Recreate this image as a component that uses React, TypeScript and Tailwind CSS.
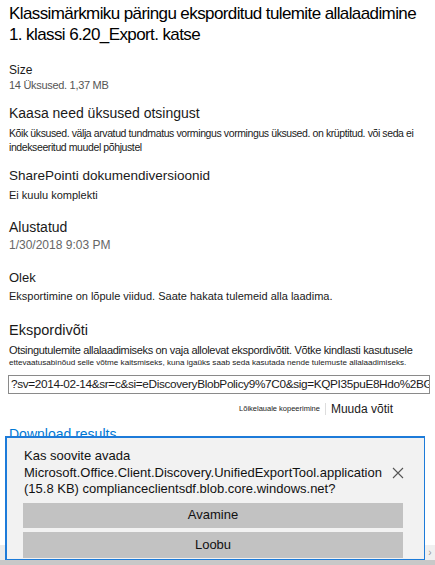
const sans = "font-['Liberation_Sans',Arial,sans-serif]";

const Field = ({ label, value, labelClass, valueClass }: { label: string; value: React.ReactNode; labelClass: string; valueClass: string }) => (
  <div>
    <div className={labelClass}>{label}</div>
    <div className={valueClass}>{value}</div>
  </div>
);

export default function App() {
  return (
    <div className={`relative w-[435px] h-[565px] overflow-hidden bg-white text-[#1a1a1a] ${sans}`}>
      <div className="px-[9px] pt-[3px]">
        <h1 className="whitespace-nowrap text-[17px] leading-[21px] tracking-[-0.6px] text-black">
          Klassimärkmiku päringu eksporditud tulemite allalaadimine
          <br />
          1. klassi 6.20_Export. katse
        </h1>

        <div className="mt-[17px]">
          <Field label="Size" value="14 Üksused. 1,37 MB" labelClass="text-[12px] leading-[16px]" valueClass="text-[11px] leading-[14px] text-[#555] tracking-[-0.3px]" />
        </div>

        <div className="mt-[12px]">
          <div className="text-[14px] leading-[18px]">Kaasa need üksused otsingust</div>
          <p className="mt-[4px] w-[410px] text-[10.5px] leading-[14px] tracking-[-0.4px]">
            Kõik üksused. välja arvatud tundmatus vormingus vormingus üksused. on krüptitud. või seda ei indekseeritud muudel põhjustel
          </p>
        </div>

        <div className="mt-[13px]">
          <Field label="SharePointi dokumendiversioonid" value="Ei kuulu komplekti" labelClass="text-[13.5px] leading-[18px]" valueClass="mt-[3px] text-[11px] leading-[14px]" />
        </div>

        <div className="mt-[16px]">
          <Field label="Alustatud" value="1/30/2018 9:03 PM" labelClass="text-[14px] leading-[18px]" valueClass="mt-[1px] text-[12px] leading-[16px] text-[#666]" />
        </div>

        <div className="mt-[16px]">
          <Field label="Olek" value="Eksportimine on lõpule viidud. Saate hakata tulemeid alla laadima." labelClass="text-[13px] leading-[17px]" valueClass="mt-[3px] text-[11px] leading-[14px]" />
        </div>

        <div className="mt-[18px]">
          <div className="text-[14.5px] leading-[19px]">Ekspordivõti</div>
          <p className="mt-[3px] whitespace-nowrap text-[11px] leading-[14px] tracking-[-0.33px]">
            Otsingutulemite allalaadimiseks on vaja allolevat ekspordivõtit. Võtke kindlasti kasutusele
          </p>
          <p className="whitespace-nowrap text-[8.1px] leading-[11px]">
            ettevaatusabinõud selle võtme kaitsmiseks, kuna igaüks saab seda kasutada nende tulemuste allalaadimiseks.
          </p>
          {/* key field, text runs past the right edge */}
          <div className="mt-[7px] ml-[-1px] h-[19px] w-[422px] overflow-hidden whitespace-nowrap border border-[#8a8a8a] px-[2px] text-[11.8px] leading-[17px] tracking-[-0.35px]">
            ?sv=2014-02-14&amp;sr=c&amp;si=eDiscoveryBlobPolicy9%7C0&amp;sig=KQPI35puE8Hdo%2BG3c
          </div>
          <div className="mt-[6px] flex items-center justify-end pr-[33px]">
            <span className="text-[7.5px]">Lõikelauale kopeerimine</span>
            <span className="mx-[5px] h-[12px] w-px bg-[#ddd]" />
            <span className="text-[12px]">Muuda võtit</span>
          </div>
          <div className="mt-[7px] text-[14px] leading-[18px] text-[#0078d4]">Download results</div>
        </div>
      </div>

      {/* browser download bar */}
      <div className="absolute left-[5px] top-[436px] w-[420px] h-[125px] border-2 border-r-[1.5px] border-[#1d7bd9] bg-[#f2f2f2]">
        <div className="flex pl-[17px] pr-[20px] pt-[10px]">
          <div className="flex-1 text-[13px] leading-[16.5px] text-[#111]">
            <div>Kas soovite avada</div>
            <div>Microsoft.Office.Client.Discovery.UnifiedExportTool.application</div>
            <div>(15.8 KB) complianceclientsdf.blob.core.windows.net?</div>
          </div>
          <svg width="12" height="12" viewBox="0 0 12 12" className="mt-[19px]">
            <path d="M1 1 L11 11 M11 1 L1 11" stroke="#555" strokeWidth="1.1" />
          </svg>
        </div>
        <div className="mt-[5px] ml-[16px] flex w-[380px] flex-col gap-[4px]">
          <div className="flex h-[25px] items-center justify-center bg-[#c2c2c2] text-[13px] text-[#111]">Avamine</div>
          <div className="flex h-[26px] items-center justify-center bg-[#c2c2c2] text-[13px] text-[#111]">Loobu</div>
        </div>
      </div>

      {/* horizontal scrollbar strip */}
      <div className="absolute right-0 top-[545px] flex h-[15px] w-[10px] items-center justify-center bg-[#f0f0f0] text-[10px] text-[#999]">›</div>
      <div className="absolute left-0 top-[545px] h-[15px] w-[5px] bg-[#eaeaea]" />
      <div className="absolute bottom-0 left-0 h-[5px] w-full bg-[#c8c8c8]" />
    </div>
  );
}
